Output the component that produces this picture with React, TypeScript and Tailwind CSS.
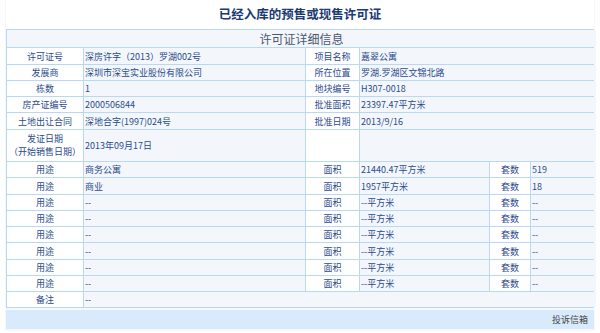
const font = { fontFamily: '"Noto Sans CJK SC", "Liberation Sans", sans-serif' };

const info = [
  ["许可证号", "深房许字（2013）罗湖002号", "项目名称", "嘉翠公寓"],
  ["发展商", "深圳市深宝实业股份有限公司", "所在位置", "罗湖.罗湖区文锦北路"],
  ["栋数", "1", "地块编号", "H307-0018"],
  ["房产证编号", "2000506844", "批准面积", "23397.47平方米"],
  ["土地出让合同", "深地合字(1997)024号", "批准日期", "2013/9/16"],
];

const uses = [
  ["商务公寓", "21440.47平方米", "519"],
  ["商业", "1957平方米", "18"],
  ["--", "--平方米", "--"],
  ["--", "--平方米", "--"],
  ["--", "--平方米", "--"],
  ["--", "--平方米", "--"],
  ["--", "--平方米", "--"],
  ["--", "--平方米", "--"],
];

const label = "bg-white h-[15.25px] flex items-center justify-center text-[#2a4b8c]";
const value = "bg-[#f3f7fc] h-[15.25px] flex items-center pl-[1px] text-[#2a4b8c]";

export default function App() {
  return (
    <div className="w-[600px] h-[333px] bg-white" style={font}>
      <div className="mx-[5px] bg-[#f7f8fa] px-[1px] pb-[2px]">
        <h1 className="h-[29px] flex items-center justify-center text-[12.5px] font-bold text-[#1b3a73] bg-white">
          已经入库的预售或现售许可证
        </h1>

        <div className="bg-[#b8d8f6] p-px grid grid-cols-[76px_221px_53px_129px_40px_65px] gap-px text-[9px] leading-none">
          <div className="col-span-6 bg-[#f3f7fc] h-[17.4px] flex items-center justify-center text-[12px] text-[#4a5670]">
            许可证详细信息
          </div>

          {info.map((r) => (
            <div key={r[0]} className="contents">
              <div className={label}>{r[0]}</div>
              <div className={value}>{r[1]}</div>
              <div className={label}>{r[2]}</div>
              <div className={value + " col-span-3"}>{r[3]}</div>
            </div>
          ))}

          <div className="bg-white h-[31.5px] flex flex-col items-center justify-center gap-[4px] text-[#2a4b8c]">
            <span>发证日期</span>
            <span>（开始销售日期）</span>
          </div>
          <div className="bg-[#f3f7fc] h-[31.5px] flex items-center pl-[1px] text-[#2a4b8c]">2013年09月17日</div>
          <div className="bg-white h-[31.5px]"></div>
          <div className="bg-[#f3f7fc] h-[31.5px] col-span-3"></div>

          {uses.map((r, i) => (
            <div key={i} className="contents">
              <div className={label}>用途</div>
              <div className={value}>{r[0]}</div>
              <div className={label}>面积</div>
              <div className={value}>{r[1]}</div>
              <div className={label}>套数</div>
              <div className={value}>{r[2]}</div>
            </div>
          ))}

          <div className={label}>备注</div>
          <div className={value + " col-span-5"}>--</div>
        </div>

        <div className="mt-[2px] h-[19px] bg-[#d8ebfc] flex items-center justify-end pr-[6px] text-[9px] text-[#444]">
          投诉信箱
        </div>
      </div>
    </div>
  );
}
